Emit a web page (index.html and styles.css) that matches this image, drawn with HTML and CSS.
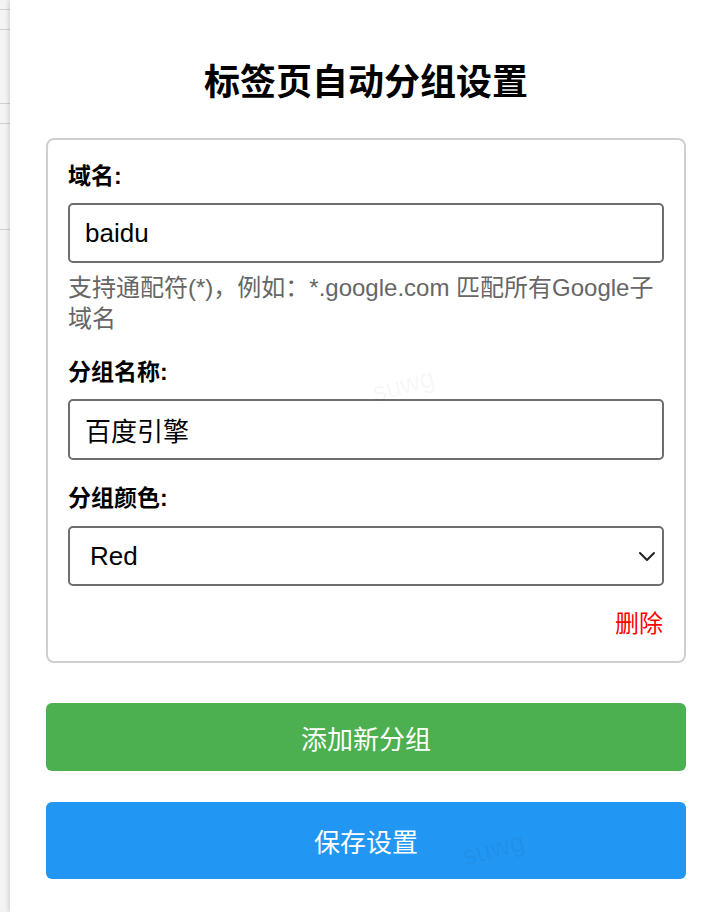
FILE: index.html
```html
<!DOCTYPE html>
<html lang="zh-CN">
<head>
<meta charset="utf-8">
<title>标签页自动分组设置</title>
<link rel="stylesheet" href="styles.css">
</head>
<body>
<div class="page">
  <div class="backdrop">
    <div class="bd-line l1"></div>
    <div class="bd-line l2"></div>
    <div class="bd-line l3"></div>
    <div class="bd-line l4"></div>
    <div class="bd-line l5"></div>
  </div>
  <main class="panel">
    <h1 class="title">标签页自动分组设置</h1>
    <section class="card">
      <div class="field">
        <label class="label">域名:</label>
        <input class="input" type="text" value="baidu">
        <p class="hint">支持通配符(*)，例如：*.google.com 匹配所有Google子域名</p>
      </div>
      <div class="field">
        <label class="label">分组名称:</label>
        <input class="input input-tall" type="text" value="百度引擎">
      </div>
      <div class="field">
        <label class="label">分组颜色:</label>
        <div class="select-wrap">
          <select class="select">
            <option>Red</option>
          </select>
          <svg class="chevron" width="18" height="12" viewBox="0 0 18 12"><path d="M2 3 L9 10 L16 3" fill="none" stroke="#222" stroke-width="2" stroke-linecap="round" stroke-linejoin="round"/></svg>
        </div>
      </div>
      <div class="actions">
        <span class="delete">删除</span>
      </div>
    </section>
    <button class="btn btn-add">添加新分组</button>
    <button class="btn btn-save">保存设置</button>
    <span class="wm wm1">suwg</span>
    <span class="wm wm2">suwg</span>
  </main>
</div>
</body>
</html>
```
FILE: styles.css
```css
html, body {
  margin: 0;
  padding: 0;
  background: #ffffff;
}
body {
  font-family: "Liberation Sans", "Noto Sans CJK SC", sans-serif;
  color: #000;
}
.page {
  display: flex;
  width: 720px;
  height: 912px;
  overflow: hidden;
}
.backdrop {
  width: 10px;
  flex: none;
  background: #f4f4f4;
  display: flex;
  flex-direction: column;
}
.bd-line {
  height: 1px;
  background: #d0d0d0;
}
.l1 { margin-top: 9px; }
.l2 { margin-top: 19px; }
.l3 { margin-top: 73px; }
.l4 { margin-top: 19px; }
.l5 { margin-top: 105px; }
.panel {
  position: relative;
  flex: 1;
  background: #fff;
  box-shadow: -2px 0 4px rgba(0, 0, 0, 0.12);
  padding: 0 34px 0 36px;
  display: flex;
  flex-direction: column;
}
.title {
  margin: 61px 0 33px;
  font-size: 36px;
  line-height: 44px;
  font-weight: 700;
  text-align: center;
}
.card {
  border: 2px solid #cfcfcf;
  border-radius: 8px;
  padding: 22px 20px 22px;
}
.field {
  display: flex;
  flex-direction: column;
  margin-bottom: 24px;
}
.label {
  font-size: 23px;
  line-height: 28px;
  font-weight: 700;
  margin-bottom: 13px;
}
.input, .select {
  box-sizing: border-box;
  width: 100%;
  height: 60px;
  border: 2px solid #6e6e6e;
  border-radius: 5px;
  font-family: "Liberation Sans", "Noto Sans CJK SC", sans-serif;
  font-size: 26px;
  color: #000;
  background: #fff;
  margin: 0;
  outline: none;
}
.input {
  padding: 0 15px;
}
.input-tall {
  height: 61px;
}
.hint {
  margin: 9px 0 0;
  font-size: 24px;
  line-height: 31px;
  color: #666;
}
.select-wrap {
  position: relative;
  margin-top: 1px;
}
.select {
  appearance: none;
  -webkit-appearance: none;
  padding: 0 20px;
}
.chevron {
  position: absolute;
  right: 8px;
  top: 24px;
}
.actions {
  display: flex;
  justify-content: flex-end;
  margin-top: -1px;
}
.delete {
  color: #ff0000;
  font-size: 24px;
  line-height: 30px;
  margin-right: 1px;
}
.btn {
  display: block;
  width: 100%;
  border: none;
  border-radius: 6px;
  color: #fff;
  font-family: "Liberation Sans", "Noto Sans CJK SC", sans-serif;
  font-size: 26px;
  padding: 0;
}
.btn-add {
  margin-top: 40px;
  height: 68px;
  background: #4caf50;
}
.btn-save {
  margin-top: 31px;
  height: 77px;
  background: #2196f3;
}
.wm {
  position: absolute;
  font-size: 27px;
  color: rgba(0, 0, 0, 0.05);
  transform: rotate(-15deg);
  pointer-events: none;
}
.wm1 { left: 362px; top: 370px; }
.wm2 { left: 452px; top: 834px; }
```
